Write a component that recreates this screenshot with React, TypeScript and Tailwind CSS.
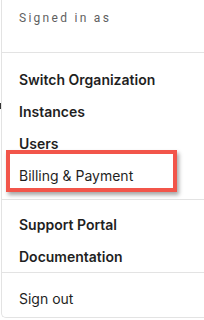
import React from 'react';

const groupOne = ['Switch Organization', 'Instances', 'Users'];
const groupTwo = ['Support Portal', 'Documentation'];

const MenuItem = ({ label, bold = true }: { label: string; bold?: boolean }) => (
  <div
    className={`h-8 flex items-center pl-[17px] text-[14px] text-[#1f1f1f] ${bold ? 'font-semibold' : 'font-normal'}`}
  >
    {label}
  </div>
);

export default function App() {
  return (
    <div className="relative w-[204px] h-[320px] bg-white overflow-hidden" style={{ fontFamily: 'Inter, "Noto Sans", sans-serif' }}>
      {/* bit of the page behind the menu */}
      <div className="absolute left-0 top-[103px] w-[1px] h-[6px] bg-[#333]" />

      <div className="ml-[1px] w-[210px] h-[318px] bg-white border-l border-b border-[#e3e3e3] rounded-bl-[5px] flex flex-col">
        {/* header */}
        <div className="h-[52px] pt-[6px] pl-[17px] leading-[20px]">
          <span
            className="text-[12px] tracking-[0.19em] text-[#5f5f5f]"
            style={{ fontFamily: 'Roboto, "Noto Sans", sans-serif' }}
          >
            Signed in as
          </span>
        </div>

        <div className="border-t border-[#e3e3e3] pt-[10px] pb-[8px]">
          {groupOne.map((item) => (
            <MenuItem key={item} label={item} />
          ))}
          {/* highlighted item */}
          <div className="relative">
            <div className="absolute left-[4px] top-[-9px] w-[171px] h-[42px] border-[4px] border-[#f2554a] shadow-[2px_3px_4px_rgba(0,0,0,0.35)]" />
            <MenuItem label="Billing & Payment" bold={false} />
          </div>
        </div>

        <div className="border-t border-[#e3e3e3] pt-[8px]">
          {groupTwo.map((item) => (
            <MenuItem key={item} label={item} />
          ))}
        </div>

        <div className="border-t border-[#e3e3e3] pt-[9px]">
          <MenuItem label="Sign out" bold={false} />
        </div>
      </div>
    </div>
  );
}
